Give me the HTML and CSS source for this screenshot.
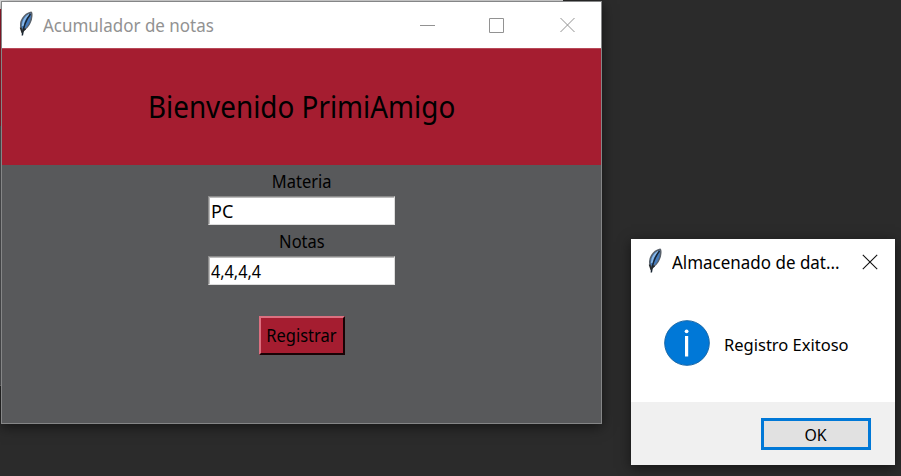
FILE: index.html
```html
<!DOCTYPE html>
<html lang="es">
<head>
<meta charset="utf-8">
<title>Acumulador de notas</title>
<link rel="stylesheet" href="styles.css">
</head>
<body>
<svg class="defs" width="0" height="0">
  <symbol id="feather" viewBox="0 0 16 26">
    <path d="M3.3 17.5C1 10 6 3.2 13.2 1.3C14.3 2 13.8 8 12.3 11C10.8 15 7.5 18.5 5 19Z" fill="#447bbd" stroke="#59616a" stroke-width="1.5"/>
    <path d="M11.5 3.5C8 5.5 5.3 9 4.8 15" fill="none" stroke="#8ab9e8" stroke-width="2"/>
    <path d="M12.5 3C8.5 8 5.5 14 4.3 24.5" fill="none" stroke="#182532" stroke-width="1.5"/>
    <path d="M2.5 16.5L4 21L7.5 17.6" fill="none" stroke="#25292d" stroke-width="1.6"/>
  </symbol>
</svg>
<main class="desktop">
  <div class="back-window"><div class="back-title"></div><div class="back-banner"></div></div>
  <section class="window app">
    <header class="titlebar">
      <svg class="feather" preserveAspectRatio="none"><use href="#feather"/></svg>
      <span class="title">Acumulador de notas</span>
      <svg class="controls" width="156" height="16" viewBox="0 0 156 16" fill="none" stroke="#929292" stroke-width="1">
        <path d="M0 8.5H15M69.5 1.5H83.5V15.5H69.5ZM140.5 1L154.5 15M154.5 1L140.5 15"/>
      </svg>
    </header>
    <div class="banner"><h1>Bienvenido PrimiAmigo</h1></div>
    <div class="form">
      <div class="label"><span>Materia</span></div>
      <div class="entry"><span>PC</span></div>
      <div class="label"><span>Notas</span></div>
      <div class="entry"><span class="values">4,4,4,4</span></div>
      <button class="register"><span>Registrar</span></button>
    </div>
  </section>
  <section class="window dialog">
    <header class="dialog-bar">
      <svg class="feather"><use href="#feather"/></svg>
      <span class="title">Almacenado de dat...</span>
      <svg class="close" width="16" height="16" fill="none" stroke="#111" stroke-width="1.1"><path d="M.8 .8L15.2 15.2M15.2 .8L.8 15.2"/></svg>
    </header>
    <div class="message">
      <svg class="info" width="46" height="46"><circle cx="23" cy="23" r="22.3" fill="#0078d7" stroke="#1766a7"/><circle cx="22.6" cy="11.3" r="1.9" fill="#fff"/><path d="M22.6 16V36.5" stroke="#fff" stroke-width="3.2"/></svg>
      <span class="text">Registro Exitoso</span>
    </div>
    <footer><button class="ok"><span>OK</span></button></footer>
  </section>
</main>
</body>
</html>
```
FILE: styles.css
```css
* { box-sizing: border-box; }
body { margin: 0; font-family: "Noto Sans", "Open Sans", sans-serif; font-size: 18px; color: #000; }
.defs { position: absolute; }
.desktop { position: relative; width: 901px; height: 476px; overflow: hidden; background: #2b2b2b; }
.back-window { position: absolute; left: 0; top: 0; width: 563px; height: 386px; background: #595a5c; border-bottom: 1px solid #777; }
.back-title { height: 9px; background: #e6e6e6; }
.back-banner { height: 117px; background: #a51d30; }
.window { position: absolute; white-space: nowrap; }
.window span, h1 { display: inline-block; flex: none; line-height: 1; }
.app { left: 1px; top: 1px; width: 601px; height: 423px; border: 1px solid #858687; background: #58595b; box-shadow: 0 3px 12px #0008; }
.titlebar { height: 46px; display: flex; align-items: center; background: #fff; padding-left: 16px; color: #929292; }
.feather { width: 16px; height: 26px; flex: none; }
.titlebar .feather { margin-top: -2px; }
.title { margin-left: 9px; transform: scaleX(.943); transform-origin: left; }
.controls { margin-left: auto; margin-right: 25px; }
.titlebar .title { margin-right: -12px; }
.banner { height: 117px; display: flex; align-items: center; justify-content: center; background: #a51d30; border-top: 1px solid #b74858; }
h1 { margin: 0; font-size: 30px; font-weight: 400; transform: scaleX(.928); }
.form { display: flex; flex-direction: column; align-items: center; }
.label { height: 31px; display: flex; align-items: center; padding-top: 1px; }
.label span, .register span { transform: scaleX(.915); }
.entry { width: 187px; height: 29px; background: #fff; border: 1px solid #8b8b8b; border-right-color: #ddd; border-bottom-color: #ddd; display: flex; align-items: center; padding: 0 2px; box-shadow: inset 1px 1px #bcbcbc; }
.values { transform: scaleX(.9); transform-origin: left; }
.register { width: 86px; height: 39px; margin-top: 31px; padding: 0 0 2px; font: inherit; background: #a51d30; border: 2px solid; border-color: #dc7080 #180205 #180205 #dc7080; display: flex; align-items: center; justify-content: center; }
.dialog { left: 631px; top: 239px; width: 264px; height: 226px; background: #fff; box-shadow: 0 3px 12px #0008; display: flex; flex-direction: column; }
.dialog-bar { height: 46px; display: flex; align-items: center; padding-left: 16px; }
.dialog-bar .feather { margin-top: -3px; }
.close { margin-left: auto; margin-right: 17px; }
.message { height: 117px; display: flex; align-items: center; padding-left: 33px; }
.info { margin-top: -1px; }
.message .text { margin-left: 14px; margin-top: 3px; font-size: 16.5px; }
footer { height: 63px; display: flex; justify-content: flex-end; align-items: center; background: #f0f0f0; padding: 1px 24px 0 0; }
.ok { width: 110px; height: 32px; padding: 2px 0 0; font: inherit; font-size: 16.5px; background: #e1e1e1; border: 3px solid #0078d7; display: flex; align-items: center; justify-content: center; }
.ok span { transform: scaleX(.96); }
```
